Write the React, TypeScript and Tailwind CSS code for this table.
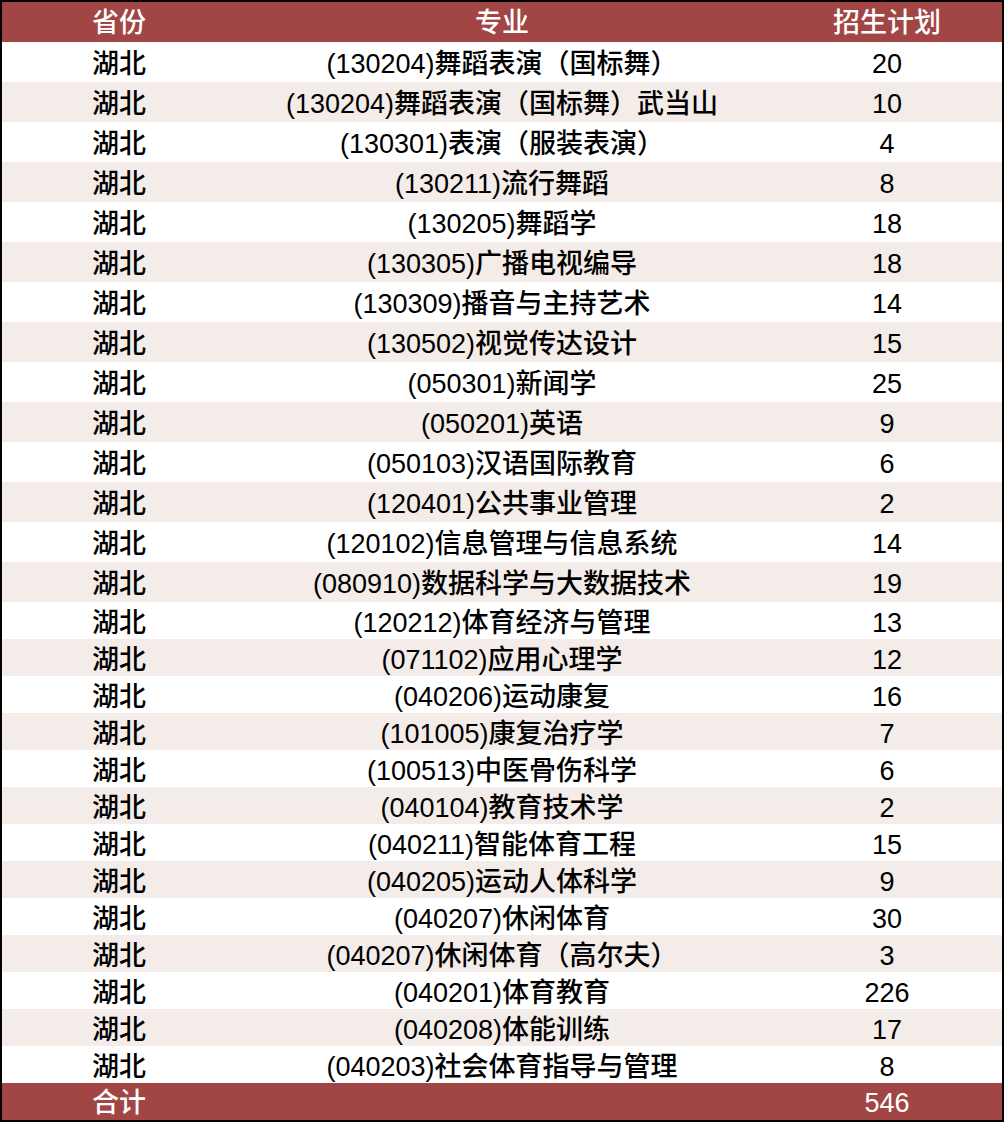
const rows: [string, number][] = [
  ["(130204)舞蹈表演（国标舞）", 20],
  ["(130204)舞蹈表演（国标舞）武当山", 10],
  ["(130301)表演（服装表演）", 4],
  ["(130211)流行舞蹈", 8],
  ["(130205)舞蹈学", 18],
  ["(130305)广播电视编导", 18],
  ["(130309)播音与主持艺术", 14],
  ["(130502)视觉传达设计", 15],
  ["(050301)新闻学", 25],
  ["(050201)英语", 9],
  ["(050103)汉语国际教育", 6],
  ["(120401)公共事业管理", 2],
  ["(120102)信息管理与信息系统", 14],
  ["(080910)数据科学与大数据技术", 19],
  ["(120212)体育经济与管理", 13],
  ["(071102)应用心理学", 12],
  ["(040206)运动康复", 16],
  ["(101005)康复治疗学", 7],
  ["(100513)中医骨伤科学", 6],
  ["(040104)教育技术学", 2],
  ["(040211)智能体育工程", 15],
  ["(040205)运动人体科学", 9],
  ["(040207)休闲体育", 30],
  ["(040207)休闲体育（高尔夫）", 3],
  ["(040201)体育教育", 226],
  ["(040208)体能训练", 17],
  ["(040203)社会体育指导与管理", 8],
];

const font = {
  fontFamily: '"Liberation Sans", "Noto Sans CJK SC", sans-serif',
};

export default function App() {
  return (
    <div
      className="w-[1004px] h-[1122px] border-2 border-black bg-white text-[27px] font-medium leading-none text-black"
      style={font}
    >
      <div className="grid h-[40px] grid-cols-[230px_540px_230px] items-center bg-[#a24545] pt-[3px] text-white">
        <div className="pl-[90px]">省份</div>
        <div className="text-center">专业</div>
        <div className="text-center">招生计划</div>
      </div>
      {rows.map(([major, count], i) => (
        <div
          key={i}
          className={`grid grid-cols-[230px_540px_230px] items-center pt-[5px] ${
            i < 14 ? "h-[40px]" : "h-[37px]"
          } ${i % 2 === 1 ? "bg-[#f3ece8]" : "bg-white"}`}
        >
          <div className="pl-[90px]">湖北</div>
          <div className="whitespace-nowrap text-center">{major}</div>
          <div className="text-center">{count}</div>
        </div>
      ))}
      <div className="grid h-[37px] grid-cols-[230px_540px_230px] items-center bg-[#a24545] pt-[4px] text-white">
        <div className="pl-[90px]">合计</div>
        <div />
        <div className="text-center">546</div>
      </div>
    </div>
  );
}
